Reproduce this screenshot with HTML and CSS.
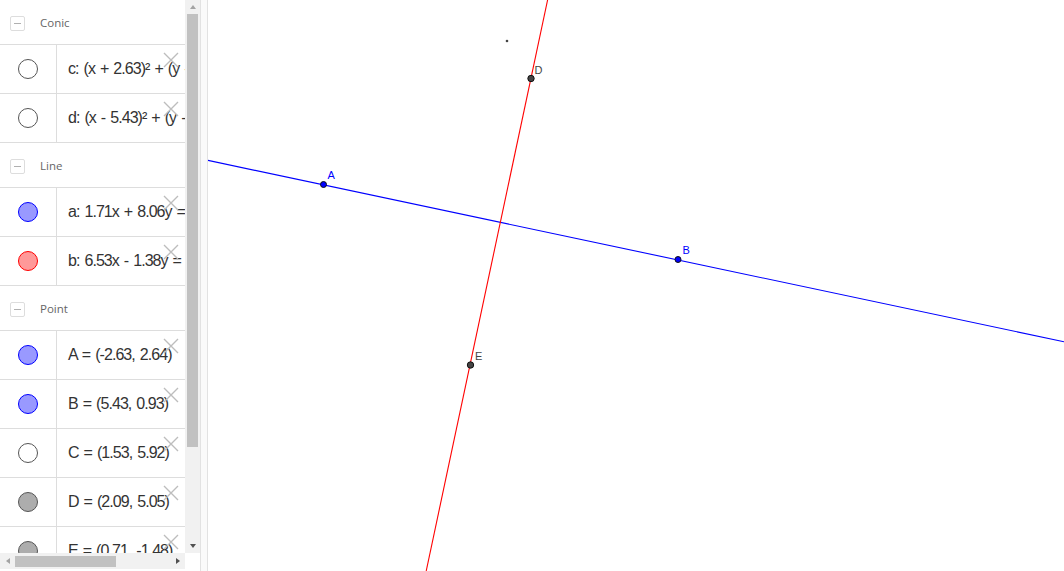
FILE: index.html
```html
<!DOCTYPE html>
<html lang="en">
<head>
<meta charset="utf-8">
<title>Graphing</title>
<link rel="stylesheet" href="styles.css">
</head>
<body>
<div class="app">
  <aside class="algebra">
    <div class="algebra-main">
      <div class="list">
        <div class="group-header"><span class="toggle"></span><span class="group-title">Conic</span></div>
        <div class="item">
          <div class="marble-cell"><span class="marble marble-empty"></span></div>
          <div class="expr">c: (x + 2.63)² + (y - 2.64)² = 26.14</div>
          <svg class="delete" viewBox="0 0 16 16"><path d="M1 1L15 15M15 1L1 15"/></svg>
        </div>
        <div class="item">
          <div class="marble-cell"><span class="marble marble-empty"></span></div>
          <div class="expr">d: (x - 5.43)² + (y - 0.93)² = 18.41</div>
          <svg class="delete" viewBox="0 0 16 16"><path d="M1 1L15 15M15 1L1 15"/></svg>
        </div>
        <div class="group-header"><span class="toggle"></span><span class="group-title">Line</span></div>
        <div class="item">
          <div class="marble-cell"><span class="marble marble-blue"></span></div>
          <div class="expr">a: 1.71x + 8.06y = 16.78</div>
          <svg class="delete" viewBox="0 0 16 16"><path d="M1 1L15 15M15 1L1 15"/></svg>
        </div>
        <div class="item">
          <div class="marble-cell"><span class="marble marble-red"></span></div>
          <div class="expr">b: 6.53x - 1.38y = 6.68</div>
          <svg class="delete" viewBox="0 0 16 16"><path d="M1 1L15 15M15 1L1 15"/></svg>
        </div>
        <div class="group-header"><span class="toggle"></span><span class="group-title">Point</span></div>
        <div class="item">
          <div class="marble-cell"><span class="marble marble-blue"></span></div>
          <div class="expr">A = (-2.63, 2.64)</div>
          <svg class="delete" viewBox="0 0 16 16"><path d="M1 1L15 15M15 1L1 15"/></svg>
        </div>
        <div class="item">
          <div class="marble-cell"><span class="marble marble-blue"></span></div>
          <div class="expr">B = (5.43, 0.93)</div>
          <svg class="delete" viewBox="0 0 16 16"><path d="M1 1L15 15M15 1L1 15"/></svg>
        </div>
        <div class="item">
          <div class="marble-cell"><span class="marble marble-empty"></span></div>
          <div class="expr">C = (1.53, 5.92)</div>
          <svg class="delete" viewBox="0 0 16 16"><path d="M1 1L15 15M15 1L1 15"/></svg>
        </div>
        <div class="item">
          <div class="marble-cell"><span class="marble marble-gray"></span></div>
          <div class="expr">D = (2.09, 5.05)</div>
          <svg class="delete" viewBox="0 0 16 16"><path d="M1 1L15 15M15 1L1 15"/></svg>
        </div>
        <div class="item">
          <div class="marble-cell"><span class="marble marble-gray"></span></div>
          <div class="expr">E = (0.71, -1.48)</div>
          <svg class="delete" viewBox="0 0 16 16"><path d="M1 1L15 15M15 1L1 15"/></svg>
        </div>
      </div>
      <div class="hscroll">
        <div class="arrow-box"><span class="arrow arrow-left"></span></div>
        <div class="hthumb"></div>
        <div class="spacer"></div>
        <div class="arrow-box"><span class="arrow arrow-right"></span></div>
      </div>
    </div>
    <div class="vscroll">
      <div class="vtrack">
        <div class="arrow-box-v"><span class="arrow arrow-up"></span></div>
        <div class="vthumb"></div>
        <div class="spacer"></div>
        <div class="arrow-box-v"><span class="arrow arrow-down"></span></div>
      </div>
      <div class="corner"></div>
    </div>
  </aside>
  <div class="splitter"></div>
  <main class="canvas">
    <svg class="plot" viewBox="208 0 856 571" width="856" height="571">
      <line class="line-a" x1="208" y1="160.4" x2="1064" y2="341.8"/>
      <line class="line-b" x1="547.6" y1="0" x2="426.2" y2="571"/>
      <circle class="pt-small" cx="507" cy="41" r="1.3"/>
      <circle class="pt-blue" cx="323.5" cy="184.5" r="3"/>
      <circle class="pt-blue" cx="678" cy="259.5" r="3"/>
      <circle class="pt-gray" cx="531" cy="78.5" r="3.2"/>
      <circle class="pt-gray" cx="470.5" cy="365" r="3.2"/>
      <text class="lbl lbl-blue" x="327.5" y="179">A</text>
      <text class="lbl lbl-blue" x="682.5" y="254">B</text>
      <text class="lbl lbl-dark" x="534.5" y="73.5">D</text>
      <text class="lbl lbl-dark" x="475" y="360">E</text>
    </svg>
  </main>
</div>
</body>
</html>
```

FILE: styles.css
```css
html, body {
  margin: 0;
  padding: 0;
  height: 100%;
  background: #ffffff;
  overflow: hidden;
}

body {
  font-family: "Liberation Sans", Arial, sans-serif;
}

.app {
  display: flex;
  width: 1064px;
  height: 571px;
}

.algebra {
  display: flex;
  flex: none;
  width: 200px;
  height: 571px;
}

.algebra-main {
  display: flex;
  flex-direction: column;
  width: 185px;
  flex: none;
}

.list {
  flex: 1;
  min-height: 0;
  overflow: hidden;
}

.group-header {
  height: 44px;
  border-bottom: 1px solid #dddddd;
  display: flex;
  align-items: center;
  padding-left: 10px;
  gap: 15px;
}

.toggle {
  width: 13px;
  height: 13px;
  border: 1px solid #dddddd;
  border-radius: 2px;
  margin-top: 3px;
  display: flex;
  align-items: center;
  justify-content: center;
  flex: none;
}

.toggle::before {
  content: "";
  width: 7px;
  height: 1px;
  background: #b0b0b0;
}

.group-title {
  font-family: "Open Sans", "Noto Sans", sans-serif;
  font-size: 11.5px;
  color: #666666;
}

.item {
  position: relative;
  height: 48px;
  border-bottom: 1px solid #dddddd;
  display: flex;
}

.marble-cell {
  flex: none;
  width: 56px;
  border-right: 1px solid #dddddd;
  display: flex;
  align-items: center;
  justify-content: center;
}

.marble {
  width: 18px;
  height: 18px;
  border-radius: 50%;
  border: 1px solid #555555;
  box-sizing: content-box;
}

.marble-empty {
  background: #ffffff;
  border-color: #555555;
}

.marble-blue {
  background: #9999ff;
  border-color: #0000ff;
}

.marble-red {
  background: #ff9999;
  border-color: #ff0000;
}

.marble-gray {
  background: #adadad;
  border-color: #555555;
}

.expr {
  display: flex;
  align-items: center;
  padding-left: 11px;
  white-space: nowrap;
  font-family: "Liberation Sans", Arial, sans-serif;
  font-size: 16px;
  letter-spacing: -0.95px;
  word-spacing: 1.5px;
  color: #333333;
}

.delete {
  position: absolute;
  left: 163px;
  top: 7px;
  width: 16px;
  height: 16px;
}

.delete path {
  stroke: #bdbdbd;
  stroke-width: 1.4;
  fill: none;
}

.hscroll {
  flex: none;
  height: 16px;
  margin-bottom: 2px;
  background: #f1f1f1;
  display: flex;
}

.arrow-box {
  width: 15px;
  flex: none;
  display: flex;
  align-items: center;
  justify-content: center;
}

.hthumb {
  width: 101px;
  height: 11px;
  margin-top: 3px;
  background: #c1c1c1;
  flex: none;
}

.spacer {
  flex: 1;
}

.arrow {
  width: 0;
  height: 0;
  border-style: solid;
}

.arrow-left {
  border-width: 3.5px 4px 3.5px 0;
  border-color: transparent #a3a3a3 transparent transparent;
}

.arrow-right {
  border-width: 3.5px 0 3.5px 4px;
  border-color: transparent transparent transparent #505050;
}

.arrow-up {
  border-width: 0 3.5px 4px 3.5px;
  border-color: transparent transparent #a3a3a3 transparent;
}

.arrow-down {
  border-width: 4px 3.5px 0 3.5px;
  border-color: #505050 transparent transparent transparent;
}

.vscroll {
  width: 15px;
  flex: none;
  display: flex;
  flex-direction: column;
}

.vtrack {
  flex: 1;
  background: #f1f1f1;
  display: flex;
  flex-direction: column;
  align-items: center;
}

.arrow-box-v {
  height: 14px;
  width: 15px;
  flex: none;
  display: flex;
  align-items: center;
  justify-content: center;
}

.vthumb {
  width: 11px;
  height: 433px;
  background: #c1c1c1;
  flex: none;
}

.corner {
  height: 18px;
  flex: none;
  background: #ffffff;
}

.splitter {
  flex: none;
  width: 6px;
  border-left: 1px solid #e2e2e2;
  border-right: 1px solid #e2e2e2;
  background: #fafafa;
}

.canvas {
  flex: 1;
  position: relative;
  overflow: hidden;
  background: #ffffff;
}

.plot {
  display: block;
}

.line-a {
  stroke: #0000ff;
  stroke-width: 1.1;
}

.line-b {
  stroke: #ff0000;
  stroke-width: 1.1;
}

.pt-small {
  fill: #444444;
}

.pt-blue {
  fill: #0000ff;
  stroke: #111111;
  stroke-width: 1;
}

.pt-gray {
  fill: #444444;
  stroke: #111111;
  stroke-width: 1;
}

.lbl {
  font-family: "Liberation Sans", Arial, sans-serif;
  font-size: 11px;
}

.lbl-blue {
  fill: #0000ff;
}

.lbl-dark {
  fill: #444444;
}
```
